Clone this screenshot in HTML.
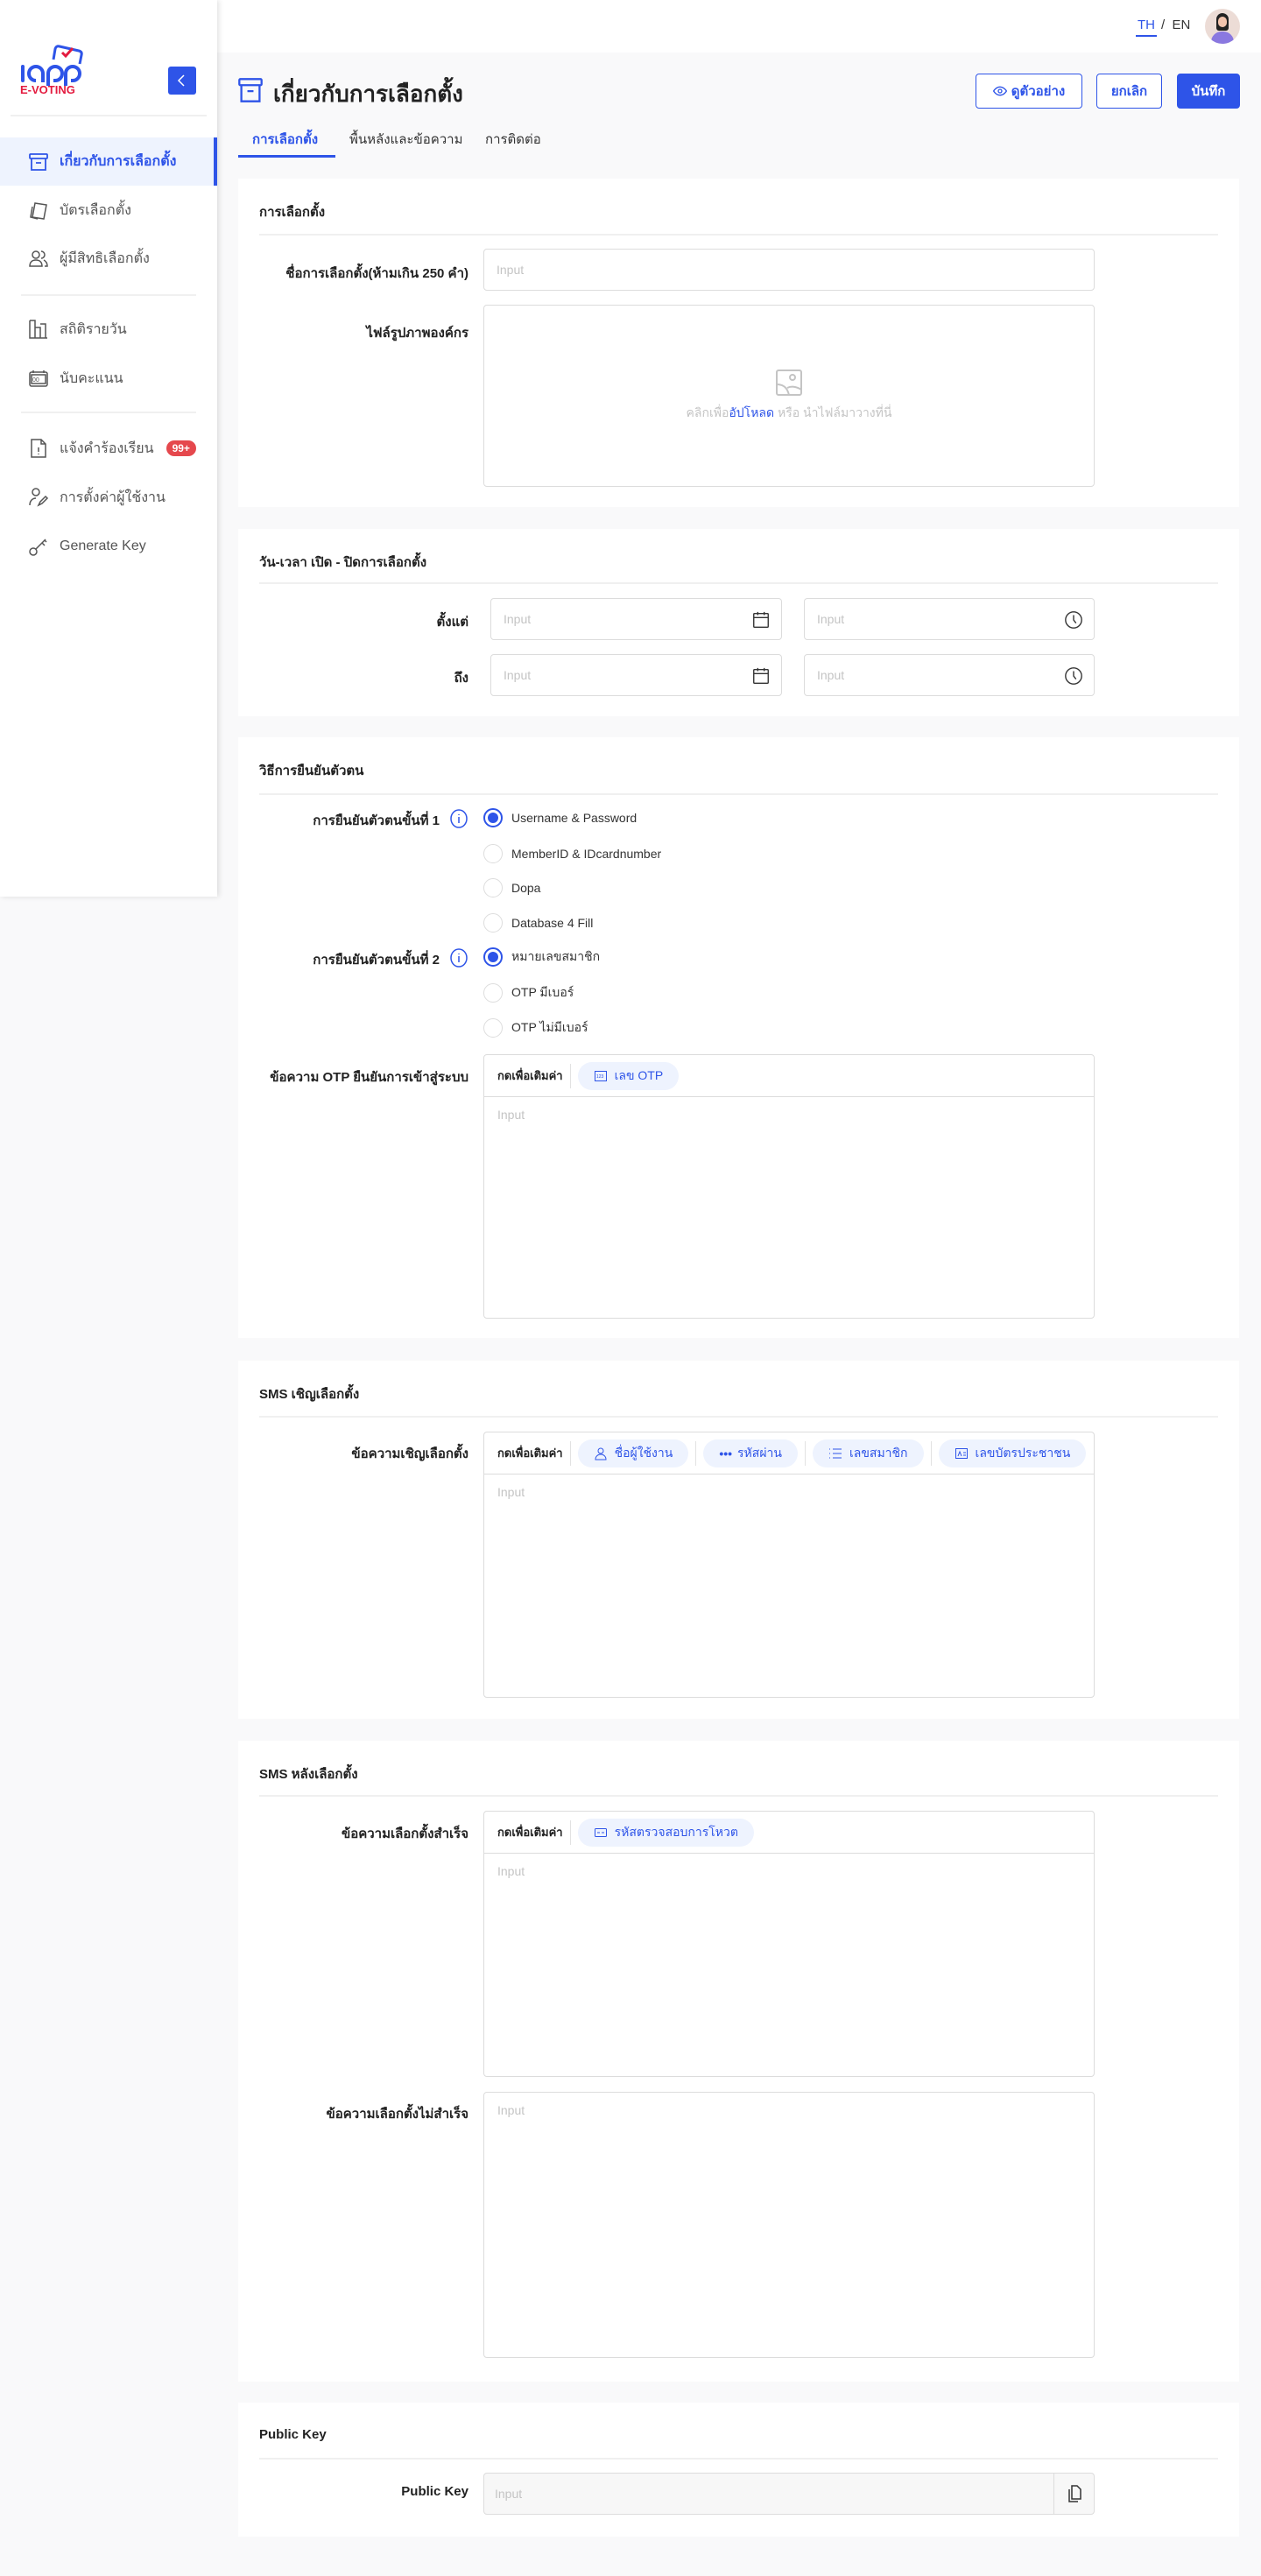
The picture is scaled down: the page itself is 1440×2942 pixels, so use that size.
<!DOCTYPE html>
<html><head><meta charset="utf-8"><style>
*{box-sizing:border-box;margin:0;padding:0}
body{width:1440px;height:2942px;background:#f9f9fa;font-family:"Liberation Sans","Noto Sans CJK SC",sans-serif;color:#222;position:relative;overflow:hidden}
.a{position:absolute}
.hdr{left:0;top:0;width:1440px;height:60px;background:#fff}
.side{left:0;top:0;width:248px;height:1024px;background:#fff;box-shadow:2px 0 6px rgba(0,0,0,.12);z-index:5}
.nav{position:absolute;left:0;width:248px;height:40px;display:flex;align-items:center;padding-left:32px;font-size:16px;color:#555}
.nav svg{width:24px;height:24px;margin-right:12px;flex:none}
.sdiv{position:absolute;left:24px;width:200px;height:2px;background:#f0f0f0}
.card{position:absolute;left:272px;width:1143px;background:#fff}
.ct{position:absolute;left:24px;font-size:15px;font-weight:bold;color:#222}
.cd{position:absolute;left:24px;right:24px;height:2px;background:#f0f0f0}
.lbl{position:absolute;right:880px;font-size:15px;font-weight:bold;color:#222;text-align:right;white-space:nowrap}
.inp{position:absolute;border:1px solid #dcdcdc;border-radius:4px;background:#fff;font-size:14px;color:#c4c4c4;padding-left:14px;display:flex;align-items:center}
.radio{position:absolute;left:280px;display:flex;align-items:center;font-size:14px;color:#333}
.radio i{width:22px;height:22px;border-radius:50%;border:1px solid #ddd;margin-right:10px;display:inline-block;position:relative}
.radio i.on{border:2px solid #2e54e8}
.radio i.on:after{content:"";position:absolute;left:3px;top:3px;width:12px;height:12px;border-radius:50%;background:#2e54e8}
.box{position:absolute;left:280px;width:698px;border:1px solid #dcdcdc;border-radius:4px;background:#fff}
.tb{height:48px;border-bottom:1px solid #dcdcdc;display:flex;align-items:center;padding-left:15px;font-size:13px;font-weight:bold;color:#222}
.sep{width:1px;height:28px;background:#e2e2e2;margin:0 8px}
.chip{height:32px;border-radius:16px;background:#eef3fe;color:#2e54e8;font-size:14px;font-weight:normal;display:flex;align-items:center;padding:0 18px}
.chip svg{width:16px;height:16px;margin-right:8px}
.ph{position:absolute;left:15px;top:60px;font-size:14px;color:#c4c4c4}
.btn{position:absolute;top:84px;height:40px;border:1px solid #2e54e8;border-radius:4px;color:#2e54e8;font-size:15px;font-weight:bold;display:flex;align-items:center;justify-content:center;background:#fff}
</style></head><body>
<div class="a hdr"></div>
<div class="a" style="left:1299px;top:20px;font-size:15px;color:#2e54e8">TH</div>
<div class="a" style="left:1297px;top:40px;width:24px;height:2px;background:#2e54e8"></div>
<div class="a" style="left:1326px;top:20px;font-size:15px;color:#333">/&nbsp;&nbsp;EN</div>
<div class="a" style="left:1376px;top:10px;width:40px;height:40px;border-radius:50%;background:#ecdcd6;overflow:hidden">
<div class="a" style="left:13px;top:5px;width:14px;height:20px;border-radius:7px 7px 3px 3px;background:#222"></div>
<div class="a" style="left:15px;top:9px;width:10px;height:12px;border-radius:5px;background:#f2c4ad"></div>
<div class="a" style="left:7px;top:26px;width:26px;height:18px;border-radius:12px 12px 0 0;background:#8a78e0"></div></div>

<div class="a side">
 <div class="a" style="left:23px;top:48px;width:76px;height:60px">
  <svg width="76" height="60" viewBox="0 0 76 60"><path d="M38 20 L40 8 Q41 4 45 5 L67 10 Q71 11 70 15 L68 25" fill="none" stroke="#2e54e8" stroke-width="3"/><path d="M48 12 l4 4 l8 -9" fill="none" stroke="#e31b3f" stroke-width="3"/>
  <rect x="1" y="26" width="4" height="20" rx="2" fill="#2e54e8"/>
  <path d="M26 46 V36 a8 8 0 1 0 -8 8 h0" fill="none" stroke="#2e54e8" stroke-width="4"/>
  <path d="M32 50 V36 a8 8 0 1 1 8 8 h-2" fill="none" stroke="#2e54e8" stroke-width="4"/>
  <path d="M52 50 V36 a8 8 0 1 1 8 8 h-2" fill="none" stroke="#2e54e8" stroke-width="4"/>
  <text x="0" y="59" font-family="Liberation Sans" font-weight="bold" font-size="13" fill="#e31b3f">E-VOTING</text></svg></div>
 <div class="a" style="left:192px;top:76px;width:32px;height:32px;background:#2e54e8;border-radius:3px"><svg width="32" height="32"><path d="M18 10 l-6 6 l6 6" fill="none" stroke="#fff" stroke-width="1.5"/></svg></div>
 <div class="sdiv" style="top:131px;left:12px;width:224px"></div>
 <div class="nav" style="top:157px;height:55px;background:#eef3fe;color:#2e54e8;font-weight:bold;border-right:4px solid #2e54e8"><svg viewBox="0 0 24 24" fill="none" stroke="#2e54e8" stroke-width="1.8"><rect x="2" y="3" width="20" height="5" rx="1"/><path d="M4 8v13h16V8M9 13h6"/></svg>เกี่ยวกับการเลือกตั้ง</div>
 <div class="nav" style="top:220px"><svg viewBox="0 0 24 24" fill="none" stroke="#555" stroke-width="1.5"><path d="M8 4l13 2-3 16-13-2z"/><path d="M5 8l-2 12 8 2"/></svg>บัตรเลือกตั้ง</div>
 <div class="nav" style="top:275px"><svg viewBox="0 0 24 24" fill="none" stroke="#555" stroke-width="1.5"><circle cx="9" cy="8" r="4"/><path d="M2 21c0-5 3-7 7-7s7 2 7 7z"/><path d="M15 4a4 4 0 010 8M18 14c2 1 4 3 4 7h-3"/></svg>ผู้มีสิทธิเลือกตั้ง</div>
 <div class="sdiv" style="top:336px"></div>
 <div class="nav" style="top:356px"><svg viewBox="0 0 24 24" fill="none" stroke="#555" stroke-width="1.5"><path d="M2 2v20h20M2 2h6v20M8 10h6v12M14 6h6v16"/></svg>สถิติรายวัน</div>
 <div class="nav" style="top:412px"><svg viewBox="0 0 24 24" fill="none" stroke="#555" stroke-width="1.5"><rect x="2" y="5" width="20" height="16" rx="2"/><rect x="4" y="8" width="16" height="10"/><path d="M6 3v3M18 3v3"/><text x="5" y="16" font-size="7" fill="#555" stroke="none">00</text></svg>นับคะแนน</div>
 <div class="sdiv" style="top:470px"></div>
 <div class="nav" style="top:492px"><svg viewBox="0 0 24 24" fill="none" stroke="#555" stroke-width="1.5"><path d="M4 2h11l5 5v15H4zM15 2v5h5M12 11v5M12 18v1"/></svg>แจ้งคำร้องเรียน<span style="margin-left:14px;background:#e5484d;color:#fff;font-size:12px;font-weight:bold;border-radius:10px;padding:2px 7px">99+</span></div>
 <div class="nav" style="top:548px"><svg viewBox="0 0 24 24" fill="none" stroke="#555" stroke-width="1.5"><circle cx="9" cy="6" r="4"/><path d="M2 21c0-5 3-8 7-8M12 21l2-4 6-6 2 2-6 6z"/></svg>การตั้งค่าผู้ใช้งาน</div>
 <div class="nav" style="top:604px"><svg viewBox="0 0 24 24" fill="none" stroke="#555" stroke-width="1.5"><circle cx="6" cy="18" r="4"/><path d="M9 15L20 4M16 8l3 3M19 5l2 2"/></svg>Generate Key</div>
</div>

<svg class="a" style="left:272px;top:88px" width="28" height="30" viewBox="0 0 24 26" fill="none" stroke="#2e54e8" stroke-width="2"><rect x="1" y="2" width="22" height="6" rx="1"/><path d="M3 8v16h18V8M9 14h6"/></svg>
<div class="a" style="left:312px;top:87px;font-size:26px;font-weight:bold;color:#222">เกี่ยวกับการเลือกตั้ง</div>
<div class="btn" style="left:1114px;width:122px"><svg width="16" height="16" viewBox="0 0 24 24" fill="none" stroke="#2e54e8" stroke-width="2" style="margin-right:5px"><path d="M1 12s4-7 11-7 11 7 11 7-4 7-11 7S1 12 1 12z"/><circle cx="12" cy="12" r="3"/></svg>ดูตัวอย่าง</div>
<div class="btn" style="left:1252px;width:75px">ยกเลิก</div>
<div class="btn" style="left:1344px;width:72px;background:#2e54e8;color:#fff">บันทึก</div>
<div class="a" style="left:288px;top:147px;font-size:15px;font-weight:bold;color:#2e54e8">การเลือกตั้ง</div>
<div class="a" style="left:272px;top:177px;width:111px;height:3px;background:#2e54e8"></div>
<div class="a" style="left:399px;top:147px;font-size:15px;color:#333">พื้นหลังและข้อความ</div>
<div class="a" style="left:554px;top:147px;font-size:15px;color:#333">การติดต่อ</div>

<!-- card1 -->
<div class="card" style="top:204px;height:375px">
 <div class="ct" style="top:26px">การเลือกตั้ง</div><div class="cd" style="top:63px"></div>
 <div class="lbl" style="top:96px">ชื่อการเลือกตั้ง(ห้ามเกิน 250 คำ)</div>
 <div class="inp" style="left:280px;top:80px;width:698px;height:48px">Input</div>
 <div class="lbl" style="top:164px">ไฟล์รูปภาพองค์กร</div>
 <div class="inp" style="left:280px;top:144px;width:698px;height:208px;flex-direction:column;justify-content:center;padding:0">
  <svg width="32" height="32" viewBox="0 0 32 32" fill="none" stroke="#c4c4c4" stroke-width="2" style="margin-bottom:8px"><rect x="2" y="2" width="28" height="28" rx="2"/><circle cx="20" cy="10" r="3"/><path d="M2 18c8 0 12 4 14 12M14 22c4-2 10-2 16 2"/></svg>
  <div style="font-size:14px;color:#c4c4c4">คลิกเพื่อ<span style="color:#2e54e8">อัปโหลด</span> หรือ นำไฟล์มาวางที่นี่</div></div>
</div>

<!-- card2 -->
<div class="card" style="top:604px;height:214px">
 <div class="ct" style="top:26px">วัน-เวลา เปิด - ปิดการเลือกตั้ง</div><div class="cd" style="top:61px"></div>
 <div class="lbl" style="top:94px">ตั้งแต่</div><div class="lbl" style="top:158px">ถึง</div>
 <div class="inp" style="left:288px;top:79px;width:333px;height:48px">Input<svg class="a" style="right:12px;top:13px" width="22" height="22" viewBox="0 0 24 24" fill="none" stroke="#333" stroke-width="1.5"><rect x="3" y="4" width="18" height="17" rx="1"/><path d="M3 9h18M8 2v4M16 2v4"/></svg></div>
 <div class="inp" style="left:646px;top:79px;width:332px;height:48px">Input<svg class="a" style="right:12px;top:13px" width="22" height="22" viewBox="0 0 24 24" fill="none" stroke="#333" stroke-width="1.5"><circle cx="12" cy="12" r="10"/><path d="M12 6v6l3 4"/></svg></div>
 <div class="inp" style="left:288px;top:143px;width:333px;height:48px">Input<svg class="a" style="right:12px;top:13px" width="22" height="22" viewBox="0 0 24 24" fill="none" stroke="#333" stroke-width="1.5"><rect x="3" y="4" width="18" height="17" rx="1"/><path d="M3 9h18M8 2v4M16 2v4"/></svg></div>
 <div class="inp" style="left:646px;top:143px;width:332px;height:48px">Input<svg class="a" style="right:12px;top:13px" width="22" height="22" viewBox="0 0 24 24" fill="none" stroke="#333" stroke-width="1.5"><circle cx="12" cy="12" r="10"/><path d="M12 6v6l3 4"/></svg></div>
</div>

<!-- card3 -->
<div class="card" style="top:842px;height:686px">
 <div class="ct" style="top:26px">วิธีการยืนยันตัวตน</div><div class="cd" style="top:64px"></div>
 <div class="lbl" style="top:83px;right:913px">การยืนยันตัวตนขั้นที่ 1</div>
 <svg class="a" style="left:242px;top:82px" width="20" height="22" viewBox="0 0 20 22" fill="none" stroke="#2e54e8" stroke-width="1.5"><ellipse cx="10" cy="11" rx="9" ry="10"/><path d="M10 9v7M10 6v1"/></svg>
 <div class="lbl" style="top:242px;right:913px">การยืนยันตัวตนขั้นที่ 2</div>
 <svg class="a" style="left:242px;top:241px" width="20" height="22" viewBox="0 0 20 22" fill="none" stroke="#2e54e8" stroke-width="1.5"><ellipse cx="10" cy="11" rx="9" ry="10"/><path d="M10 9v7M10 6v1"/></svg>
 <div class="radio" style="top:81px"><i class="on"></i>Username &amp; Password</div>
 <div class="radio" style="top:122px"><i></i>MemberID &amp; IDcardnumber</div>
 <div class="radio" style="top:161px"><i></i>Dopa</div>
 <div class="radio" style="top:201px"><i></i>Database 4 Fill</div>
 <div class="radio" style="top:240px"><i class="on"></i>หมายเลขสมาชิก</div>
 <div class="radio" style="top:281px"><i></i>OTP มีเบอร์</div>
 <div class="radio" style="top:321px"><i></i>OTP ไม่มีเบอร์</div>
 <div class="lbl" style="top:376px">ข้อความ OTP ยืนยันการเข้าสู่ระบบ</div>
 <div class="box" style="top:362px;height:302px"><div class="tb">กดเพื่อเติมค่า<span class="sep"></span><span class="chip"><svg viewBox="0 0 16 16" fill="none" stroke="#2e54e8"><rect x="1.5" y="2.5" width="13" height="11"/><text x="3" y="10" font-size="5" fill="#2e54e8" stroke="none">123</text></svg>เลข OTP</span></div><div class="ph">Input</div></div>
</div>

<!-- card4 -->
<div class="card" style="top:1554px;height:409px">
 <div class="ct" style="top:26px">SMS เชิญเลือกตั้ง</div><div class="cd" style="top:63px"></div>
 <div class="lbl" style="top:94px">ข้อความเชิญเลือกตั้ง</div>
 <div class="box" style="top:81px;height:304px"><div class="tb">กดเพื่อเติมค่า<span class="sep"></span>
  <span class="chip"><svg viewBox="0 0 16 16" fill="none" stroke="#2e54e8"><circle cx="8" cy="5" r="3"/><path d="M2 15c0-4 3-6 6-6s6 2 6 6z"/></svg>ชื่อผู้ใช้งาน</span><span class="sep"></span>
  <span class="chip"><span style="margin-right:6px;font-weight:bold">•••</span>รหัสผ่าน</span><span class="sep"></span>
  <span class="chip"><svg viewBox="0 0 16 16" fill="none" stroke="#2e54e8"><path d="M5 3h10M5 8h10M5 13h10M1 3h1M1 8h1M1 13h1"/></svg>เลขสมาชิก</span><span class="sep"></span>
  <span class="chip"><svg viewBox="0 0 16 16" fill="none" stroke="#2e54e8"><rect x="1.5" y="2.5" width="13" height="11"/><path d="M4 11l2-5 2 5M10 7h3M10 10h3"/></svg>เลขบัตรประชาชน</span></div><div class="ph">Input</div></div>
</div>

<!-- card5 -->
<div class="card" style="top:1988px;height:732px">
 <div class="ct" style="top:26px">SMS หลังเลือกตั้ง</div><div class="cd" style="top:62px"></div>
 <div class="lbl" style="top:94px">ข้อความเลือกตั้งสำเร็จ</div>
 <div class="box" style="top:80px;height:304px"><div class="tb">กดเพื่อเติมค่า<span class="sep"></span><span class="chip"><svg viewBox="0 0 16 16" fill="none" stroke="#2e54e8"><rect x="1.5" y="3.5" width="13" height="9" rx="1"/><path d="M4 8h3M9 8h3"/></svg>รหัสตรวจสอบการโหวต</span></div><div class="ph">Input</div></div>
 <div class="lbl" style="top:414px">ข้อความเลือกตั้งไม่สำเร็จ</div>
 <div class="box" style="top:401px;height:304px"><div class="ph" style="top:12px">Input</div></div>
</div>

<!-- card6 -->
<div class="card" style="top:2744px;height:153px">
 <div class="ct" style="top:28px">Public Key</div><div class="cd" style="top:63px"></div>
 <div class="lbl" style="top:93px">Public Key</div>
 <div class="inp" style="left:280px;top:80px;width:698px;height:48px;background:#f7f7f7;padding-left:12px">Input
  <div class="a" style="right:0;top:0;width:46px;height:46px;border-left:1px solid #dcdcdc;display:flex;align-items:center;justify-content:center"><svg width="20" height="22" viewBox="0 0 20 22" fill="none" stroke="#333" stroke-width="1.5"><path d="M7 2h6l4 4v11H7z"/><path d="M4 6v14h10"/></svg></div></div>
</div>
</body></html>
